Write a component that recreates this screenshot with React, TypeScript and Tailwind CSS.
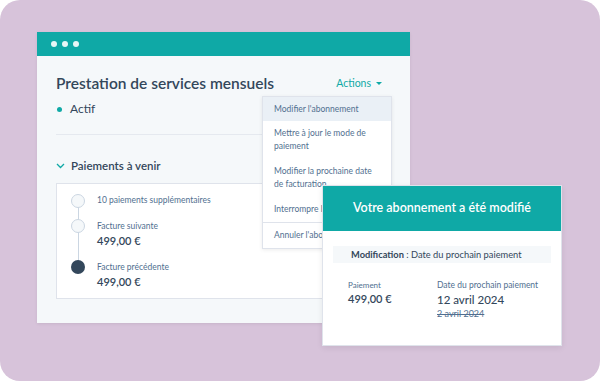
import React from 'react';

const menuItems = [
  { label: "Modifier l'abonnement", active: true },
  { label: 'Mettre à jour le mode de paiement' },
  { label: 'Modifier la prochaine date de facturation' },
  { label: "Interrompre l'abonnement" },
];

const Timeline = () => (
  <div className="relative flex flex-col pl-[14px] pt-[9px]">
    <div className="absolute left-[21px] top-[18px] h-[68px] w-px bg-[#cbd6e2]" />
    <div className="flex items-center gap-[12px] h-[16px]">
      <span className="relative h-[14px] w-[14px] shrink-0 rounded-full border border-[#cbd6e2] bg-[#f5f8fa]" />
      <span className="text-[8.5px] text-[#516f90]">10 paiements supplémentaires</span>
    </div>
    <div className="mt-[10px] flex gap-[12px]">
      <span className="relative h-[14px] w-[14px] shrink-0 rounded-full border border-[#cbd6e2] bg-[#f5f8fa]" />
      <div className="flex flex-col">
        <span className="text-[8.5px] leading-[14px] text-[#516f90]">Facture suivante</span>
        <span className="text-[11px] font-semibold leading-[15px] text-[#33475b]">499,00 €</span>
      </div>
    </div>
    <div className="mt-[12px] flex gap-[12px]">
      <span className="relative h-[14px] w-[14px] shrink-0 rounded-full bg-[#33475b]" />
      <div className="flex flex-col">
        <span className="text-[8.5px] leading-[14px] text-[#516f90]">Facture précédente</span>
        <span className="text-[11px] font-semibold leading-[15px] text-[#33475b]">499,00 €</span>
      </div>
    </div>
  </div>
);

const Dropdown = () => (
  <div className="absolute left-[225px] top-[64px] w-[130px] border border-[#dfe3eb] bg-white shadow-[0_1px_4px_rgba(0,0,0,0.08)]">
    {menuItems.map((item) => (
      <div
        key={item.label}
        className={`px-[11px] text-[8.5px] leading-[13px] text-[#516f90] ${item.active ? 'bg-[#eaf0f6] py-[5.5px]' : 'py-[6px]'}`}
      >
        {item.label}
      </div>
    ))}
    <div className="border-t border-[#dfe3eb] px-[11px] py-[6px] text-[8.5px] leading-[13px] text-[#516f90]">
      Annuler l'abonnement
    </div>
  </div>
);

const MainWindow = () => (
  <div className="relative w-[373px] h-[291px] bg-[#f5f8fa] shadow-[0_1px_3px_rgba(0,0,0,0.08)]">
    <div className="flex h-[24px] items-center gap-[5px] bg-[#0fa9a6] pl-[14px]">
      <span className="h-[6px] w-[6px] rounded-full bg-white/90" />
      <span className="h-[6px] w-[6px] rounded-full bg-white/90" />
      <span className="h-[6px] w-[6px] rounded-full bg-white/90" />
    </div>
    <div className="flex flex-col px-[19px]">
      <div className="mt-[16px] flex items-center justify-between">
        <h1 className="text-[15.5px] font-semibold text-[#33475b]">Prestation de services mensuels</h1>
        <div className="flex items-center gap-[5px] pr-[9px] text-[10.5px] text-[#0fa9a6]">
          Actions
          <span className="h-0 w-0 border-x-[3px] border-t-[3px] border-x-transparent border-t-[#0fa9a6]" />
        </div>
      </div>
      <div className="mt-[5px] flex items-center gap-[8px] pl-[1px]">
        <span className="h-[5px] w-[5px] rounded-full bg-[#0fa9a6]" />
        <span className="text-[12px] text-[#33475b]">Actif</span>
      </div>
      <div className="mt-[16px] h-px w-full bg-[#e5e9ef]" />
      <div className="mt-[22px] flex items-center gap-[6px]">
        <svg width="9" height="6" viewBox="0 0 9 6" fill="none">
          <path d="M1 1l3.5 3.5L8 1" stroke="#0fa9a6" strokeWidth="1.3" />
        </svg>
        <span className="text-[11.5px] font-semibold text-[#33475b]">Paiements à venir</span>
      </div>
      <div className="mt-[8px] h-[116px] w-full border border-[#dfe3eb] bg-white">
        <Timeline />
      </div>
    </div>
    <Dropdown />
  </div>
);

const Popup = () => (
  <div className="absolute left-[322px] top-[185px] w-[240px] h-[161px] border border-[#dfe3eb] bg-white shadow-[0_2px_6px_rgba(0,0,0,0.08)]">
    <div className="flex h-[45px] items-center justify-center bg-[#0fa9a6] text-[12.5px] font-semibold text-white">
      Votre abonnement a été modifié
    </div>
    <div className="mx-[10px] mt-[15px] flex h-[17px] items-center bg-[#f5f8fa] pl-[18px] text-[9.3px] text-[#33475b]">
      <span className="font-bold">Modification</span>
      <span>&nbsp;: Date du prochain paiement</span>
    </div>
    <div className="mt-[16px] flex pl-[25px]">
      <div className="flex w-[89px] flex-col">
        <span className="text-[8px] leading-[12px] text-[#516f90]">Paiement</span>
        <span className="text-[11px] font-semibold leading-[16px] text-[#33475b]">499,00 €</span>
      </div>
      <div className="flex flex-col">
        <span className="text-[8.5px] leading-[12px] text-[#516f90]">Date du prochain paiement</span>
        <span className="text-[11.5px] font-medium leading-[17px] text-[#33475b]">12 avril 2024</span>
        <span className="text-[9px] leading-[12px] text-[#516f90] line-through">2 avril 2024</span>
      </div>
    </div>
  </div>
);

export default function App() {
  return (
    <div className="h-[381px] w-[600px] bg-white font-['Lato',sans-serif]">
      <div className="relative h-full w-full overflow-hidden rounded-[20px] bg-[#d7c3da] pl-[37px] pt-[32px]">
        <MainWindow />
        <Popup />
      </div>
    </div>
  );
}
